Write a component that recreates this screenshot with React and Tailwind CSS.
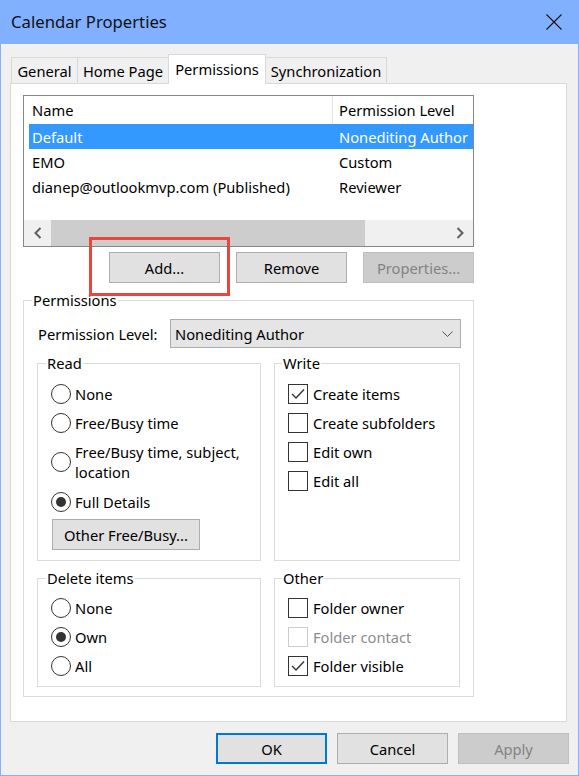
import React from "react";

const TABS = [
  { label: "General", width: "w-[67px]" },
  { label: "Home Page", width: "w-[92px]" },
  { label: "Permissions", width: "w-[98px]", active: true },
  { label: "Synchronization", width: "w-[122px]" },
];

const MEMBERS = [
  { name: "Default", level: "Nonediting Author", selected: true },
  { name: "EMO", level: "Custom" },
  { name: "dianep@outlookmvp.com (Published)", level: "Reviewer" },
];

function Button({ children, disabled, primary, className = "" }) {
  let look = "bg-[#e1e1e1] border border-[#adadad] text-black";
  if (primary) look = "bg-[#e1e1e1] border-2 border-[#0078d7] text-black";
  if (disabled) look = "bg-[#cccccc] border border-[#bfbfbf] text-[#838383]";
  return (
    <button
      className={`h-[31px] w-[111px] flex items-center justify-center ${look} ${className}`}
    >
      {children}
    </button>
  );
}

function Group({ title, className = "", legendClass = "ml-[8px]", children }) {
  return (
    <fieldset className={`border border-[#dcdcdc] ${className}`}>
      <legend className={`px-[1px] leading-[20px] ${legendClass}`}>{title}</legend>
      {children}
    </fieldset>
  );
}

function Radio({ checked, children, className = "h-[29px]" }) {
  return (
    <div className={`flex items-center gap-[4px] ${className}`}>
      <span className="w-[20px] h-[20px] shrink-0 rounded-full border border-[#333333] bg-white flex items-center justify-center">
        {checked && <span className="w-[10px] h-[10px] rounded-full bg-[#333333]" />}
      </span>
      <span>{children}</span>
    </div>
  );
}

function Check({ checked, disabled, children }) {
  return (
    <div className="flex items-center gap-[5px] h-[29px]">
      <span
        className={`w-[20px] h-[20px] shrink-0 border bg-white flex items-center justify-center ${
          disabled ? "border-[#cccccc]" : "border-[#333333]"
        }`}
      >
        {checked && (
          <svg width="18" height="18" viewBox="0 0 18 18">
            <path d="M3 9 L7 13 L15 4.5" fill="none" stroke="#333333" strokeWidth="1.4" />
          </svg>
        )}
      </span>
      <span className={disabled ? "text-[#8d8d8d]" : ""}>{children}</span>
    </div>
  );
}

function ScrollArrow({ dir }) {
  return (
    <div className="w-[27px] h-full flex items-center justify-center bg-[#f0f0f0]">
      <svg width="8" height="12" viewBox="0 0 8 12">
        <path
          d={dir === "left" ? "M6.5 1 L1.5 6 L6.5 11" : "M1.5 1 L6.5 6 L1.5 11"}
          fill="none"
          stroke="#606060"
          strokeWidth="2"
        />
      </svg>
    </div>
  );
}

export default function App() {
  return (
    <div className="w-[579px] h-[776px] flex flex-col bg-[#f0f0f0] border-x border-b border-[#86b1f6] text-[14.7px] leading-[20px] text-black font-['Noto_Sans',sans-serif]">
      {/* title bar */}
      <div className="h-[44px] shrink-0 bg-[#80b0ff] flex items-center justify-between pl-[10px] pr-[16px]">
        <span className="text-[16.7px] text-[#111111]">Calendar Properties</span>
        <svg width="16" height="16" viewBox="0 0 16 16">
          <path d="M0.5 0.5 L15.5 15.5 M15.5 0.5 L0.5 15.5" stroke="#111111" strokeWidth="1.1" />
        </svg>
      </div>

      {/* tabs */}
      <div className="flex items-end h-[39px] pt-[10px] pl-[10px]">
        {TABS.map((t, i) => (
          <div
            key={t.label}
            className={`${t.width} ${i > 0 ? "-ml-px" : ""} flex items-center justify-center border border-b-0 border-[#d9d9d9] ${
              t.active
                ? "h-[30px] -mb-px bg-white relative z-10 pb-[2px]"
                : "h-[26px] bg-[#f0f0f0]"
            }`}
          >
            {t.label}
          </div>
        ))}
      </div>

      {/* tab page */}
      <div className="ml-[9px] w-[557px] h-[639px] shrink-0 bg-white border border-[#d9d9d9] flex flex-col">
        {/* member list */}
        <div className="ml-[12px] mt-[11px] w-[451px] h-[152px] border border-[#828790] flex flex-col">
          <div className="h-[28px] flex items-center shrink-0">
            <div className="w-[309px] h-full flex items-center pl-[8px] border-r border-[#e5e5e5]">
              Name
            </div>
            <div className="pl-[6px]">Permission Level</div>
          </div>
          {MEMBERS.map((m) => (
            <div
              key={m.name}
              className={`ml-[5px] h-[25px] flex items-center shrink-0 ${
                m.selected ? "bg-[#3399ff] text-white" : ""
              }`}
            >
              <div className="w-[307px] pl-[3px] whitespace-nowrap">{m.name}</div>
              <div className="pl-[3px] whitespace-nowrap">{m.level}</div>
            </div>
          ))}
          <div className="flex-1" />
          <div className="h-[26px] flex shrink-0 bg-[#f0f0f0]">
            <ScrollArrow dir="left" />
            <div className="w-[314px] h-full bg-[#cdcdcd]" />
            <div className="flex-1" />
            <ScrollArrow dir="right" />
          </div>
        </div>

        {/* list actions */}
        <div className="ml-[12px] mt-[5px] w-[451px] flex justify-end gap-[16px]">
          <div className="relative">
            <Button>Add...</Button>
            <span className="absolute -left-[20px] -top-[15px] w-[141px] h-[59px] border-[3px] border-[#e8463e] pointer-events-none" />
          </div>
          <Button>Remove</Button>
          <Button disabled>Properties...</Button>
        </div>

        {/* permission details */}
        <Group title="Permissions" className="ml-[12px] mt-[7px] w-[451px] pb-[9px]">
          <div className="mt-[9px] flex items-center">
            <span className="w-[146px] pl-[14px]">Permission Level:</span>
            <div className="w-[291px] h-[29px] bg-[#e5e5e5] border border-[#acacac] flex items-center justify-between pl-[4px] pr-[7px]">
              <span>Nonediting Author</span>
              <svg width="11" height="6" viewBox="0 0 11 6">
                <path d="M0.5 0.5 L5.5 5.5 L10.5 0.5" fill="none" stroke="#555555" strokeWidth="1" />
              </svg>
            </div>
          </div>

          <div className="mt-[5px] ml-[13px] flex gap-[13px]">
            <Group title="Read" className="w-[224px] h-[208px]">
              <div className="pt-[6px] pl-[13px]">
                <Radio>None</Radio>
                <Radio>Free/Busy time</Radio>
                <Radio className="h-[50px]">
                  Free/Busy time, subject,
                  <br />
                  location
                </Radio>
                <Radio checked>Full Details</Radio>
              </div>
              <Button className="!w-[148px] ml-[14px] mt-[3px]">Other Free/Busy...</Button>
            </Group>
            <Group title="Write" legendClass="ml-[7px]" className="w-[186px] h-[208px]">
              <div className="pt-[6px] pl-[13px]">
                <Check checked>Create items</Check>
                <Check>Create subfolders</Check>
                <Check>Edit own</Check>
                <Check>Edit all</Check>
              </div>
            </Group>
          </div>

          <div className="mt-[7px] ml-[13px] flex gap-[13px]">
            <Group title="Delete items" className="w-[224px] h-[119px]">
              <div className="pt-[5px] pl-[13px]">
                <Radio>None</Radio>
                <Radio checked>Own</Radio>
                <Radio>All</Radio>
              </div>
            </Group>
            <Group title="Other" legendClass="ml-[7px]" className="w-[186px] h-[119px]">
              <div className="pt-[5px] pl-[13px]">
                <Check>Folder owner</Check>
                <Check disabled>Folder contact</Check>
                <Check checked>Folder visible</Check>
              </div>
            </Group>
          </div>
        </Group>
      </div>

      {/* dialog buttons */}
      <div className="mt-[11px] pr-[9px] flex justify-end gap-[10px]">
        <Button primary>OK</Button>
        <Button>Cancel</Button>
        <Button disabled>Apply</Button>
      </div>
    </div>
  );
}
